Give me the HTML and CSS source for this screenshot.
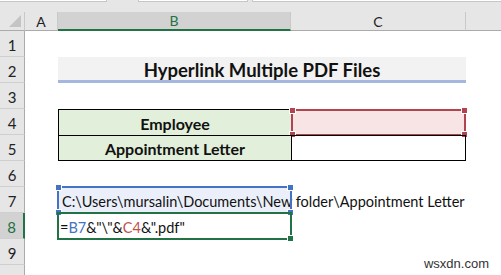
FILE: index.html
```html
<!DOCTYPE html>
<html lang="en">
<head>
    <meta charset="UTF-8">
    <meta name="viewport" content="width=device-width, initial-scale=1.0">
    <title>Hyperlink Multiple PDF Files</title>
    <link rel="stylesheet" href="styles.css">
</head>
<body>

<div class="chrome">
    <span class="box name-box"></span>
    <span class="box fx-box"></span>
    <span class="box formula-box"></span>
</div>

<div class="sheet">
    <div class="corner"><span class="tri"></span></div>
    <div class="colh">A</div>
    <div class="colh active">B</div>
    <div class="colh">C</div>
    <div class="colh last"></div>

    <div class="rowh">1</div>

    <div class="rowh">2</div>
    <div class="title">Hyperlink Multiple PDF Files</div>

    <div class="rowh">3</div>

    <div class="rowh">4</div>
    <div class="cell b tbl head">Employee</div>
    <div class="cell c tbl pink">
        <div class="sel red"><i class="tl"></i><i class="tr"></i><i class="bl"></i><i class="br"></i></div>
    </div>

    <div class="rowh">5</div>
    <div class="cell b tbl head bottom">Appointment Letter</div>
    <div class="cell c tbl bottom"></div>

    <div class="rowh">6</div>

    <div class="rowh">7</div>
    <div class="cell b path">C:\Users\mursalin\Documents\New folder\Appointment Letter
        <div class="sel blue"><i class="tl"></i><i class="tr"></i><i class="bl"></i><i class="br"></i></div>
    </div>

    <div class="rowh active">8</div>
    <div class="cell b formula">=<span class="ref-b">B7</span>&amp;"\"&amp;<span class="ref-c">C4</span>&amp;".pdf"
        <div class="sel green"><i class="br"></i></div>
    </div>

    <div class="rowh">9</div>
    <div class="rowh"></div>
</div>

<div class="watermark">wsxdn.com</div>

</body>
</html>
```

FILE: styles.css
```css
body {
    margin: 0;
    font-family: Lato, "Liberation Sans", sans-serif;
    background: #fff;
    overflow: hidden;
}
.chrome {
    display: flex;
    height: 12px;
    background: #e6e6e6;
}
.box {
    height: 1px;
    background: #fff;
    border-bottom: 1px solid #c6c6c6;
}
.name-box {
    width: 106px;
    border-right: 1px solid #c6c6c6;
}
.fx-box {
    width: 108px;
    margin-left: 31px;
    border-left: 1px solid #c6c6c6;
    border-right: 1px solid #c6c6c6;
}
.formula-box {
    flex: 1;
    margin-left: 4px;
    border-left: 1px solid #c6c6c6;
}
.sheet {
    display: grid;
    grid-template-columns: 25px 33px 233px 175px 1fr;
    grid-template-rows: 19px;
    grid-auto-rows: 26px;
}
.corner {
    position: relative;
    background: #e6e6e6;
    border-bottom: 1px solid #ababab;
    border-right: 1px solid #c9c9c9;
}
.tri {
    position: absolute;
    right: 3px;
    bottom: 3px;
    border-style: solid;
    border-width: 0 0 12px 12px;
    border-color: transparent transparent #c4c4c4 transparent;
}
.colh {
    background: #e6e6e6;
    border-bottom: 1px solid #ababab;
    border-right: 1px solid #c9c9c9;
    font-size: 14px;
    color: #222;
    display: flex;
    align-items: center;
    justify-content: center;
}
.colh.active {
    background: #d2d2d2;
    color: #217346;
    border-bottom: 2px solid #217346;
}
.colh.last {
    border-right: none;
}
.rowh {
    grid-column: 1;
    background: #e6e6e6;
    border-bottom: 1px solid #cfcfcf;
    border-right: 1px solid #ababab;
    font-size: 15px;
    color: #222;
    display: flex;
    align-items: center;
    justify-content: center;
    padding-top: 2px;
    box-sizing: border-box;
}
.rowh.active {
    background: #d2d2d2;
    color: #217346;
    border-right: 2px solid #217346;
}
.title {
    grid-column: 3 / 5;
    background: #f2f2f2;
    border-bottom: 3px solid #a6b7de;
    font-weight: bold;
    font-size: 18.5px;
    color: #111;
    display: flex;
    align-items: center;
    justify-content: center;
    padding-top: 2px;
}
.cell {
    position: relative;
    font-size: 14.5px;
    color: #111;
    display: flex;
    align-items: center;
    box-sizing: border-box;
    white-space: nowrap;
}
.b { grid-column: 3; }
.c { grid-column: 4; }
.tbl {
    border-left: 1px solid #000;
    border-top: 1px solid #000;
}
.tbl.c { border-right: 1px solid #000; }
.tbl.bottom { border-bottom: 1px solid #000; }
.head {
    background: #e2efda;
    font-weight: bold;
    font-size: 16px;
    justify-content: center;
    padding-top: 1px;
}
.pink { background: #f8e3e5; }
.path {
    background: #eaeff9;
    padding-left: 4px;
    padding-top: 2px;
}
.formula {
    padding-left: 2px;
    padding-top: 2px;
}
.ref-b { color: #4472c4; }
.ref-c { color: #c0504d; }
.sel {
    position: absolute;
    top: -1px;
    left: -1px;
    right: -1px;
    bottom: -1px;
    border: 2px solid;
}
.sel i {
    position: absolute;
    width: 5px;
    height: 5px;
    background: currentColor;
    border: 1px solid #fff;
}
.sel .tl { top: -4px; left: -4px; }
.sel .tr { top: -4px; right: -4px; }
.sel .bl { bottom: -4px; left: -4px; }
.sel .br { bottom: -4px; right: -4px; }
.red { color: #b3434f; border-color: #b3434f; }
.blue { color: #4472c4; border-color: #4472c4; }
.green { color: #217346; border-color: #217346; }
.watermark {
    position: absolute;
    right: 12px;
    bottom: 4px;
    font-family: "Liberation Sans", sans-serif;
    font-size: 13px;
    color: #333;
}
```
